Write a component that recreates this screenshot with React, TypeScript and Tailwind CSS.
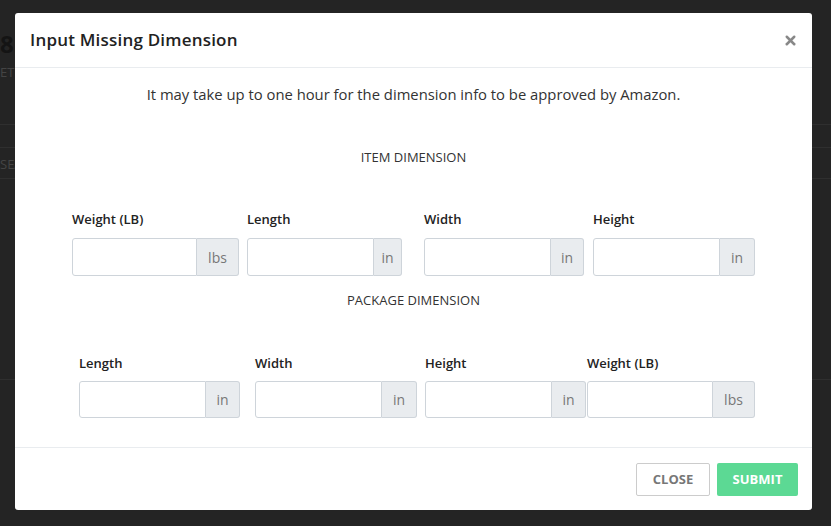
import { X } from "lucide-react";

const font = { fontFamily: '"Open Sans", "Liberation Sans", sans-serif' };

type Field = { label: string; unit: string; w: string; addon: string; ml: string };

const itemFields: Field[] = [
  { label: "Weight (LB)", unit: "lbs", w: "w-[167px]", addon: "w-[42px]", ml: "" },
  { label: "Length", unit: "in", w: "w-[155px]", addon: "w-[28px]", ml: "ml-[8px]" },
  { label: "Width", unit: "in", w: "w-[160px]", addon: "w-[33px]", ml: "ml-[22px]" },
  { label: "Height", unit: "in", w: "w-[162px]", addon: "w-[35px]", ml: "ml-[9px]" },
];

const packageFields: Field[] = [
  { label: "Length", unit: "in", w: "w-[161px]", addon: "w-[34px]", ml: "" },
  { label: "Width", unit: "in", w: "w-[162px]", addon: "w-[35px]", ml: "ml-[15px]" },
  { label: "Height", unit: "in", w: "w-[161px]", addon: "w-[34px]", ml: "ml-[8px]" },
  { label: "Weight (LB)", unit: "lbs", w: "w-[168px]", addon: "w-[42px]", ml: "ml-[1px]" },
];

function InputGroup({ field, h }: { field: Field; h: string }) {
  return (
    <div className={`flex ${field.w} ${h}`}>
      <input className="min-w-0 flex-1 border border-[#ced4da] rounded-l-[3px] bg-white outline-none" />
      <span
        className={`${field.addon} flex items-center justify-center border border-l-0 border-[#ced4da] bg-[#e9ecef] rounded-r-[3px] text-[14px] text-[#777]`}
      >
        {field.unit}
      </span>
    </div>
  );
}

export default function App() {
  return (
    <div className="relative h-[526px] w-[831px] overflow-hidden bg-[#242424]" style={font}>
      {/* page behind the backdrop */}
      <div className="flex flex-col text-[#141414]">
        <div className="h-[30px]" />
        <div className="text-[24px] font-bold leading-[28px] pl-0">8.</div>
        <div className="text-[13px] text-[#444] leading-[20px] mt-[4px]">ET I</div>
        <div className="mt-[42px] border-t border-[#2f2f2f]" />
        <div className="mt-[22px] border-t border-[#2f2f2f]" />
        <div className="text-[13px] text-[#444] leading-[20px] mt-[6px]">SEA</div>
        <div className="mt-[4px] border-t border-[#2f2f2f]" />
        <div className="mt-[200px] border-t border-[#2f2f2f]" />
      </div>

      {/* modal */}
      <div className="absolute inset-0 pl-[15px] pt-[13px]">
        <div className="w-[797px] h-[497px] bg-white rounded-[3px] flex flex-col">
          <div className="h-[55px] flex items-center justify-between pl-[15px] pr-[14px] border-b border-[#e9ecef]">
            <h2 className="text-[17px] font-semibold text-[#222] tracking-[0.2px]">Input Missing Dimension</h2>
            <X size={15} strokeWidth={4} className="text-[#888]" />
          </div>

          <div className="flex-1 flex flex-col items-center">
            <p className="mt-[16px] text-[14.8px] text-[#333] leading-[20px]">
              It may take up to one hour for the dimension info to be approved by Amazon.
            </p>
            <p className="mt-[44px] text-[13px] text-[#333] leading-[18px]">ITEM DIMENSION</p>

            <div className="self-start ml-[57px] mt-[44px] flex">
              {itemFields.map((f, i) => (
                <div key={i} className={`flex flex-col ${f.ml}`}>
                  <label className="text-[13px] font-semibold text-[#222] leading-[18px] mb-[10px]">{f.label}</label>
                  <InputGroup field={f} h="h-[38px]" />
                </div>
              ))}
            </div>

            <p className="mt-[15px] text-[13px] text-[#333] leading-[18px]">PACKAGE DIMENSION</p>

            <div className="self-start ml-[64px] mt-[45px] flex">
              {packageFields.map((f, i) => (
                <div key={i} className={`flex flex-col ${f.ml}`}>
                  <label className="text-[13px] font-semibold text-[#222] leading-[18px] mb-[9px]">{f.label}</label>
                  <InputGroup field={f} h="h-[37px]" />
                </div>
              ))}
            </div>
          </div>

          <div className="h-[63px] border-t border-[#e9ecef] flex items-start justify-end gap-[7px] pt-[15px] pr-[14px]">
            <button className="w-[74px] h-[33px] border border-[#ccc] rounded-[2px] text-[13px] font-bold text-[#777] bg-white">
              CLOSE
            </button>
            <button className="w-[81px] h-[33px] rounded-[2px] text-[13px] font-bold text-white bg-[#5cd994]">
              SUBMIT
            </button>
          </div>
        </div>
      </div>
    </div>
  );
}
